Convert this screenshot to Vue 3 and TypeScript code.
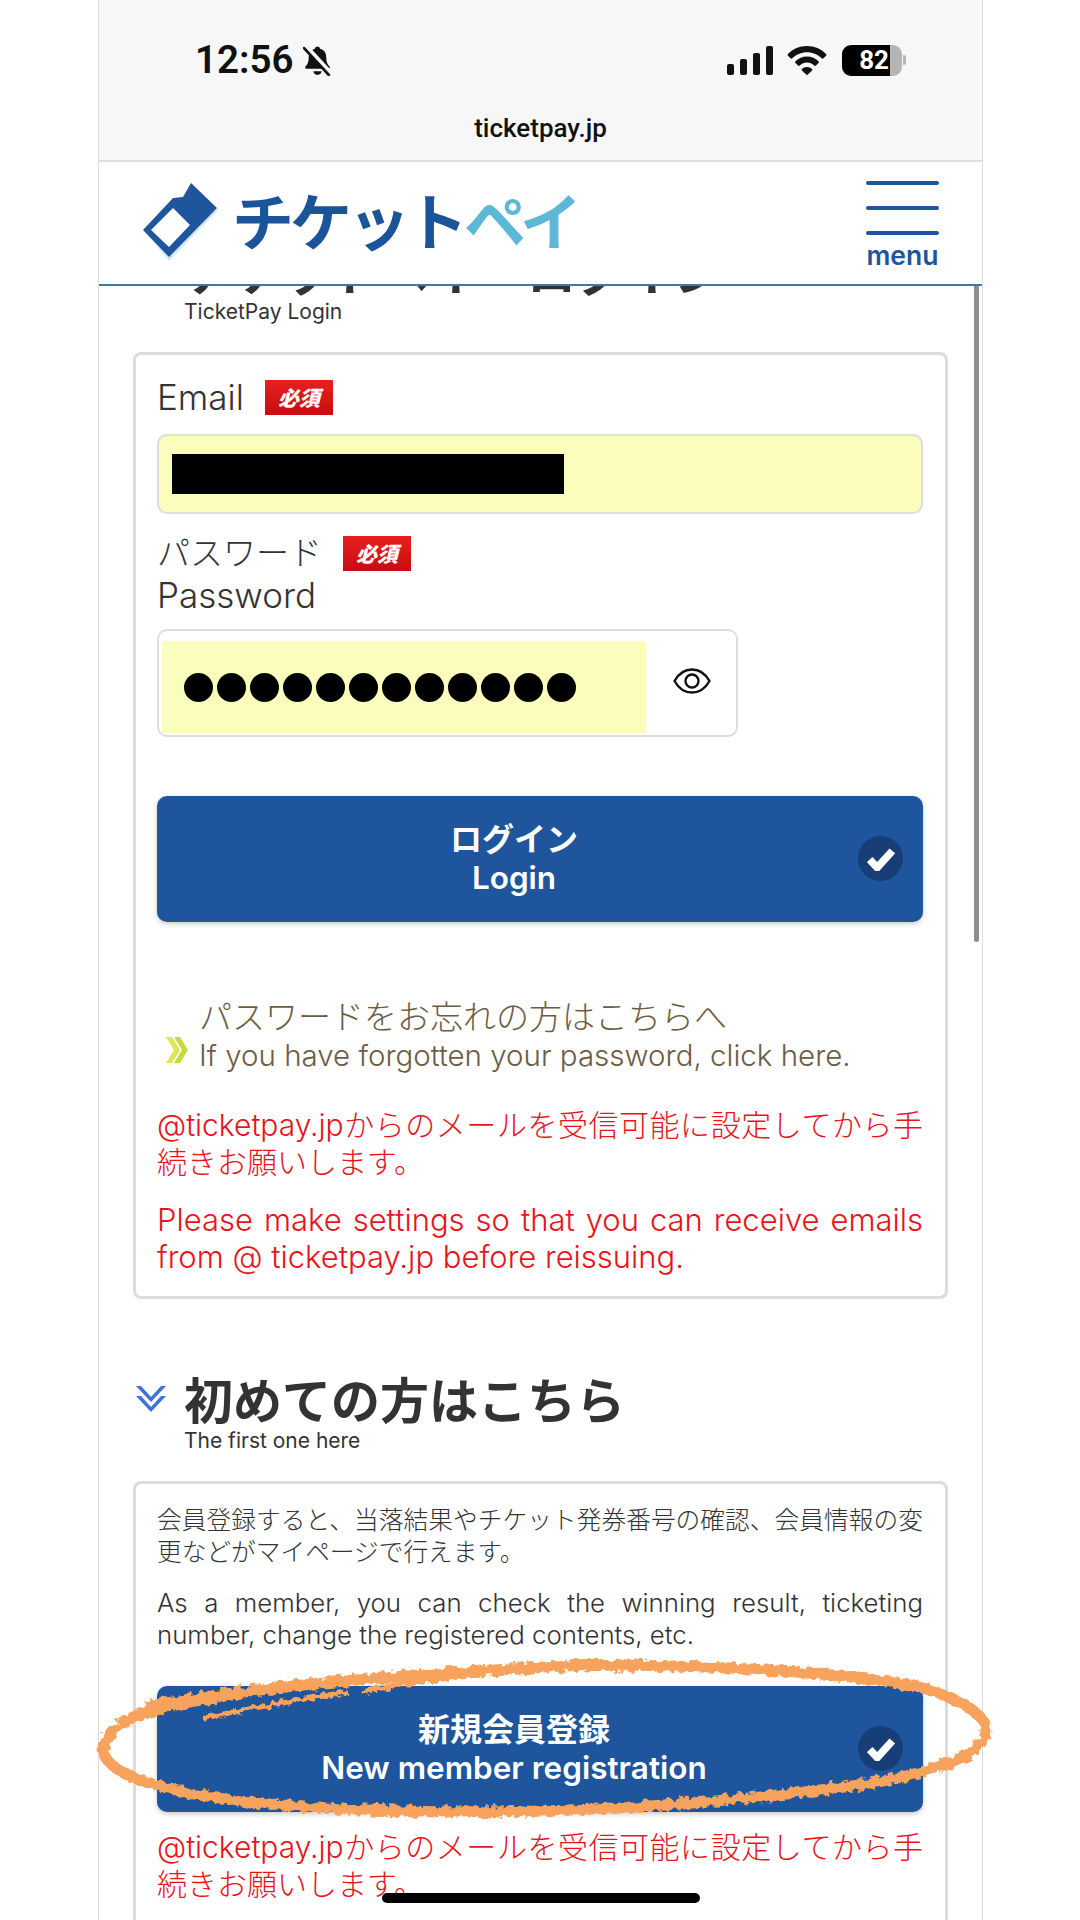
<script setup lang="ts">
const dots: number[] = Array.from({ length: 12 }, (_, i) => i)
</script>

<template>
  <div class="page">
    <div class="screen">
      <div class="topbar">
        <div class="status">
          <div class="time-group">
            <span class="time">12:56</span>
            <svg class="bell" viewBox="0 0 28 30" width="29" height="31">
              <path d="M14 1.5c1.4 0 2.3.9 2.5 2.2 4 1 6 4.2 6 8.3 0 4.2 1 6.600 3 8.500.9.900.4 2.500-1 2.500H3.500c-1.400 0-1.900-1.600-1-2.500 2-1.900 3-4.300 3-8.500 0-4.100 2-7.300 6-8.300.2-1.300 1.100-2.200 2.500-2.200z" fill="#111" />
              <path d="M10 25.500h8c-.3 2.200-1.900 3.500-4 3.500s-3.700-1.300-4-3.500z" fill="#111" />
              <path d="M3 2l24 26" stroke="#f7f7f7" stroke-width="5" />
              <path d="M1 3l24 26" stroke="#111" stroke-width="2.600" stroke-linecap="round" />
            </svg>
          </div>
          <div class="indicators">
            <div class="signal">
              <i class="b1"></i><i class="b2"></i><i class="b3"></i><i class="b4"></i>
            </div>
            <svg class="wifi" viewBox="0 0 40 29" width="40" height="29">
              <path d="M20 0C12.500 0 5.800 3 1 7.900c-.5.500-.5 1.300 0 1.800l2.500 2.600c.5.500 1.300.5 1.800 0C9.100 8.500 14.300 6.200 20 6.200s10.900 2.300 14.700 6.100c.5.500 1.300.5 1.800 0L39 9.700c.5-.5.500-1.300 0-1.800C34.200 3 27.500 0 20 0z" fill="#111" />
              <path d="M20 10.500c-4.500 0-8.500 1.800-11.500 4.700-.5.500-.5 1.300 0 1.800l2.500 2.500c.5.500 1.300.5 1.800 0 1.900-1.800 4.400-2.900 7.200-2.900s5.300 1.100 7.200 2.900c.5.500 1.300.5 1.800 0l2.500-2.500c.5-.5.500-1.300 0-1.800-3-2.900-7-4.700-11.500-4.700z" fill="#111" />
              <path d="M20 21c-2 0-3.800.8-5.100 2-.4.400-.4 1 0 1.400l4.300 4.200c.4.400 1.200.4 1.600 0l4.300-4.200c.4-.4.400-1 0-1.400-1.300-1.200-3.100-2-5.100-2z" fill="#111" />
            </svg>
            <div class="battery">
              <div class="battery-body">
                <span class="battery-fill">82</span>
                <span class="battery-rest"></span>
              </div>
              <span class="battery-nub"></span>
            </div>
          </div>
        </div>
        <div class="url">ticketpay.jp</div>
      </div>

      <header class="site-header">
        <svg class="logo-mark" viewBox="140 180 82 82" width="82" height="82">
          <path d="M146 233l73-24-50 52z" fill="#cfe6f5" />
          <path d="M143 230l30-32 10-1 8-14 26 25-48 49z" fill="#1f559c" />
          <path d="M151 230l22-22 17 17-21 22z" fill="#fff" />
        </svg>
        <div class="logo-text"><span class="dark">チケット</span><span class="light">ペイ</span></div>
        <div class="menu">
          <span class="bar"></span>
          <span class="bar"></span>
          <span class="bar"></span>
          <span class="menu-label">menu</span>
        </div>
      </header>

      <main class="main">
        <div class="section-title first">
          <h2>チケットペイ　ログイン</h2>
          <p>TicketPay Login</p>
        </div>

        <section class="card login-card">
          <div class="label-row">
            <span class="label latin">Email</span>
            <span class="badge">必須</span>
          </div>
          <div class="input-email"><div class="redaction"></div></div>

          <div class="label-row pw-label">
            <span class="label">パスワード</span>
            <span class="badge">必須</span>
          </div>
          <div class="label latin pw-en">Password</div>

          <div class="pw-box">
            <div class="pw-field">
              <span v-for="d in dots" :key="d" class="dot"></span>
            </div>
            <div class="eye-wrap">
              <svg viewBox="0 0 38 28" width="38" height="28" fill="none" stroke="#111" stroke-width="2.400">
                <path d="M1.500 14C6 6 12 2.500 19 2.500S32 6 36.500 14C32 22 26 25.500 19 25.500S6 22 1.500 14z" />
                <circle cx="19" cy="14" r="6.500" />
              </svg>
            </div>
          </div>

          <button class="action login-btn">
            <span class="jp">ログイン</span>
            <span class="en">Login</span>
            <span class="check">
              <svg viewBox="0 0 26 22" width="28" height="24"><path d="M2.500 11.500l7 7.500L23.500 3.500" fill="none" stroke="#fff" stroke-width="7" /></svg>
            </span>
          </button>

          <div class="forgot">
            <svg class="chev-right" viewBox="0 0 24 28" width="24" height="28">
              <path d="M1 1l6 0 8 13-8 13-6 0 8-13z" fill="#dfe64e" />
              <path d="M9 1l6 0 8 13-8 13-6 0 8-13z" fill="#c9d83a" />
            </svg>
            <div class="forgot-text">
              <div class="forgot-jp">パスワードをお忘れの方はこちらへ</div>
              <div class="forgot-en">If you have forgotten your password, click here.</div>
            </div>
          </div>

          <p class="red red-jp">@ticketpay.jpからのメールを受信可能に設定してから手続きお願いします。</p>
          <p class="red red-en">Please make settings so that you can receive emails from @ ticketpay.jp before reissuing.</p>
        </section>

        <div class="section-title second">
          <svg class="chev-down" viewBox="0 0 32 28" width="32" height="28">
            <path d="M1 1h5l10 11L26 1h5L16 17z" fill="#3f71dc" />
            <path d="M1 11h5l10 11 10-11h5L16 27z" fill="#3f71dc" />
          </svg>
          <h2>初めての方はこちら</h2>
          <p>The first one here</p>
        </div>

        <section class="card member-card">
          <p class="desc">会員登録すると、当落結果やチケット発券番号の確認、会員情報の変更などがマイページで行えます。</p>
          <p class="desc desc-en">As a member, you can check the winning result, ticketing number, change the registered contents, etc.</p>
          <button class="action member-btn">
            <span class="jp">新規会員登録</span>
            <span class="en">New member registration</span>
            <span class="check">
              <svg viewBox="0 0 26 22" width="28" height="24"><path d="M2.500 11.500l7 7.500L23.500 3.500" fill="none" stroke="#fff" stroke-width="7" /></svg>
            </span>
          </button>
          <p class="red red-last">@ticketpay.jpからのメールを受信可能に設定してから手続きお願いします。</p>
        </section>
      </main>
    </div>

    <div class="scrollbar"></div>

    <svg class="scribble" viewBox="0 0 1080 1920" width="1080" height="1920">
      <defs>
        <filter id="rough" x="-5%" y="-20%" width="110%" height="140%">
          <feTurbulence type="fractalNoise" baseFrequency="0.14" numOctaves="3" seed="4" />
          <feDisplacementMap in="SourceGraphic" scale="9" />
        </filter>
      </defs>
      <g fill="none" stroke="#f7a25d" stroke-linecap="round" filter="url(#rough)">
        <path stroke-width="11" d="M150 1706C270 1684 420 1674 560 1666C700 1662 850 1674 915 1686C955 1696 988 1714 986 1732C984 1754 940 1772 860 1785C720 1804 560 1815 400 1811C280 1808 184 1799 129 1776C100 1761 92 1744 122 1724C149 1708 200 1698 270 1690" />
        <path stroke-width="6" d="M364 1691C420 1680 470 1674 540 1670" />
        <path stroke-width="5" d="M205 1718C250 1708 290 1702 345 1692" />
      </g>
    </svg>

    <div class="home-indicator"></div>
  </div>
</template>

<style>
html, body { margin: 0; background: #fff; }
</style>

<style scoped>
.page {
  position: relative;
  width: 1080px;
  height: 1920px;
  overflow: hidden;
  background: #fff;
  font-family: Inter, "Noto Sans CJK JP", sans-serif;
  color: #333;
}
.screen {
  width: 885px;
  height: 1920px;
  margin-left: 98px;
  box-sizing: border-box;
  border-left: 1px solid #dcdcdc;
  border-right: 1px solid #dcdcdc;
  overflow: hidden;
}
.topbar {
  height: 162px;
  box-sizing: border-box;
  background: #f7f7f7;
  border-bottom: 2px solid #dedede;
  padding-top: 42px;
}
.status {
  display: flex;
  justify-content: space-between;
  align-items: center;
  height: 36px;
  padding: 0 76px 0 96px;
}
.time-group { display: flex; align-items: center; gap: 10px; }
.time {
  font-family: Roboto, sans-serif;
  font-size: 38.500px;
  font-weight: 600;
  line-height: 36px;
  color: #111;
}
.indicators { display: flex; align-items: center; gap: 14px; }
.signal { display: flex; align-items: flex-end; gap: 6px; height: 29px; }
.signal i { display: block; width: 7px; background: #111; border-radius: 2px; }
.b1 { height: 11px; }
.b2 { height: 16px; }
.b3 { height: 22px; }
.b4 { height: 29px; }
.battery { display: flex; align-items: center; gap: 1px; margin-left: 1px; }
.battery-body {
  display: flex;
  width: 60px;
  height: 31px;
  border-radius: 9px;
  overflow: hidden;
}
.battery-fill {
  width: 48px;
  background: #000;
  color: #fff;
  font-family: Roboto, sans-serif;
  font-weight: 700;
  font-size: 26px;
  line-height: 31px;
  text-align: right;
  padding-right: 1px;
  box-sizing: border-box;
}
.battery-rest { flex: 1; background: #b5b5b5; }
.battery-nub { width: 3px; height: 10px; background: #b5b5b5; border-radius: 0 2px 2px 0; }
.url {
  margin-top: 34px;
  text-align: center;
  font-family: Roboto, sans-serif;
  font-size: 26px;
  font-weight: 500;
  line-height: 32px;
  color: #111;
}

.site-header {
  position: relative;
  z-index: 2;
  display: flex;
  align-items: flex-start;
  height: 124px;
  box-sizing: border-box;
  background: #fff;
  border-bottom: 2px solid #3a7ca8;
  padding: 18px 43px 0 41px;
}
.logo-text {
  margin-left: 10px;
  margin-top: 2px;
  font-family: "Noto Sans CJK JP", sans-serif;
  font-weight: 700;
  font-size: 62px;
  line-height: 74px;
  letter-spacing: -4px;
  white-space: nowrap;
}
.dark { color: #1c5499; }
.light { color: #5db7d6; letter-spacing: -6px; }
.menu {
  margin-left: auto;
  width: 73px;
  display: flex;
  flex-direction: column;
  padding-top: 1px;
}
.bar {
  display: block;
  height: 4px;
  background: #1f559c;
  border-radius: 2px;
  margin-bottom: 21px;
}
.menu-label {
  margin-top: -18px;
  text-align: center;
  font-family: Inter, sans-serif;
  font-size: 26.500px;
  font-weight: 600;
  line-height: 34px;
  color: #1f559c;
}

.main {
  margin-top: -45px;
  padding: 0 34px;
}
.section-title { position: relative; padding-left: 51px; }
.first { margin-bottom: 27px; }
.section-title h2 {
  margin: 0;
  font-family: "Noto Sans CJK JP", sans-serif;
  font-weight: 700;
  font-size: 49px;
  line-height: 58px;
  color: #333;
  white-space: nowrap;
}
.section-title p {
  margin: 0;
  font-size: 21px;
  font-weight: 400;
  line-height: 26px;
  color: #333;
}
.second { margin-top: 68px; margin-bottom: 27px; }
.second h2 { line-height: 61px; }
.chev-down { position: absolute; left: 2px; top: 18px; }

.card {
  border: 3px solid #dcdcdc;
  border-radius: 8px;
  padding: 20px 22px 21px 21px;
  background: #fff;
}
.login-card { padding-top: 22px; }
.member-card { padding-bottom: 60px; }

.label-row { display: flex; align-items: center; gap: 21px; height: 40px; }
.label {
  font-size: 33px;
  font-weight: 300;
  line-height: 40px;
  color: #333;
}
.latin { font-size: 35px; }
.badge {
  width: 68px;
  height: 35px;
  background: linear-gradient(#e7201f, #c90c10);
  color: #fff;
  font-family: "Noto Sans CJK JP", sans-serif;
  font-weight: 900;
  font-style: italic;
  font-size: 21px;
  line-height: 35px;
  text-align: center;
}
.input-email {
  display: flex;
  align-items: center;
  margin-top: 17px;
  height: 80px;
  box-sizing: border-box;
  padding-left: 13px;
  background: #fbfdbd;
  border: 2px solid #dddddd;
  border-radius: 10px;
}
.redaction { width: 392px; height: 40px; background: #000; }
.pw-label { margin-top: 18px; height: 42px; }
.pw-en { line-height: 42px; }
.pw-box {
  display: flex;
  margin-top: 13px;
  width: 581px;
  height: 108px;
  box-sizing: border-box;
  border: 2px solid #dddddd;
  border-radius: 10px;
  padding: 10px 0 2px 3px;
}
.pw-field {
  display: flex;
  align-items: center;
  gap: 4px;
  width: 484px;
  padding-left: 22px;
  box-sizing: border-box;
  background: #fbfdbd;
}
.dot { width: 29px; height: 29px; border-radius: 50%; background: #000; }
.eye-wrap { flex: 1; display: flex; justify-content: center; padding-top: 26px; padding-left: 2px; }
.eye-wrap svg { display: block; }

.action {
  position: relative;
  display: flex;
  flex-direction: column;
  align-items: center;
  justify-content: center;
  width: 100%;
  height: 126px;
  padding: 0 52px 0 0;
  border: 0;
  border-radius: 10px;
  background: #1f559c;
  box-shadow: 0 2px 5px rgba(0, 0, 0, 0.22);
  color: #fff;
  font-family: inherit;
  font-weight: 700;
}
.login-btn { margin-top: 59px; }
.member-btn { margin-top: 35px; }
.jp { font-size: 32px; line-height: 38px; }
.en { font-size: 31.500px; line-height: 38px; font-weight: 600; }
.check {
  position: absolute;
  right: 20px;
  top: 40px;
  display: flex;
  align-items: center;
  justify-content: center;
  width: 45px;
  height: 45px;
  border-radius: 50%;
  background: #173e76;
}

.forgot { display: flex; align-items: flex-end; margin-top: 76px; padding-left: 8px; }
.chev-right { margin-bottom: 10px; }
.forgot-text { margin-left: 10px; color: #6d5c44; }
.forgot-jp { font-size: 33px; line-height: 38px; font-weight: 300; }
.forgot-en { font-size: 29.500px; line-height: 38px; font-weight: 300; }

.red { margin: 0; color: #e8141c; font-size: 30px; font-weight: 300; text-align: justify; }
.red-jp { margin-top: 33px; line-height: 37px; }
.red-en { margin-top: 20px; line-height: 37px; font-size: 31px; }
.red-last { margin-top: 17px; line-height: 37px; }

.desc { margin: 0; font-size: 24.700px; font-weight: 300; line-height: 32px; text-align: justify; color: #333; }
.desc-en { margin-top: 19px; font-size: 25.800px; }

.scrollbar {
  position: absolute;
  left: 974px;
  top: 266px;
  width: 5px;
  height: 676px;
  border-radius: 3px;
  background: #8d8d8d;
}
.scribble { position: absolute; left: 0; top: 0; pointer-events: none; }
.home-indicator {
  position: absolute;
  left: 382px;
  top: 1893px;
  width: 318px;
  height: 10px;
  border-radius: 5px;
  background: #000;
}
</style>
